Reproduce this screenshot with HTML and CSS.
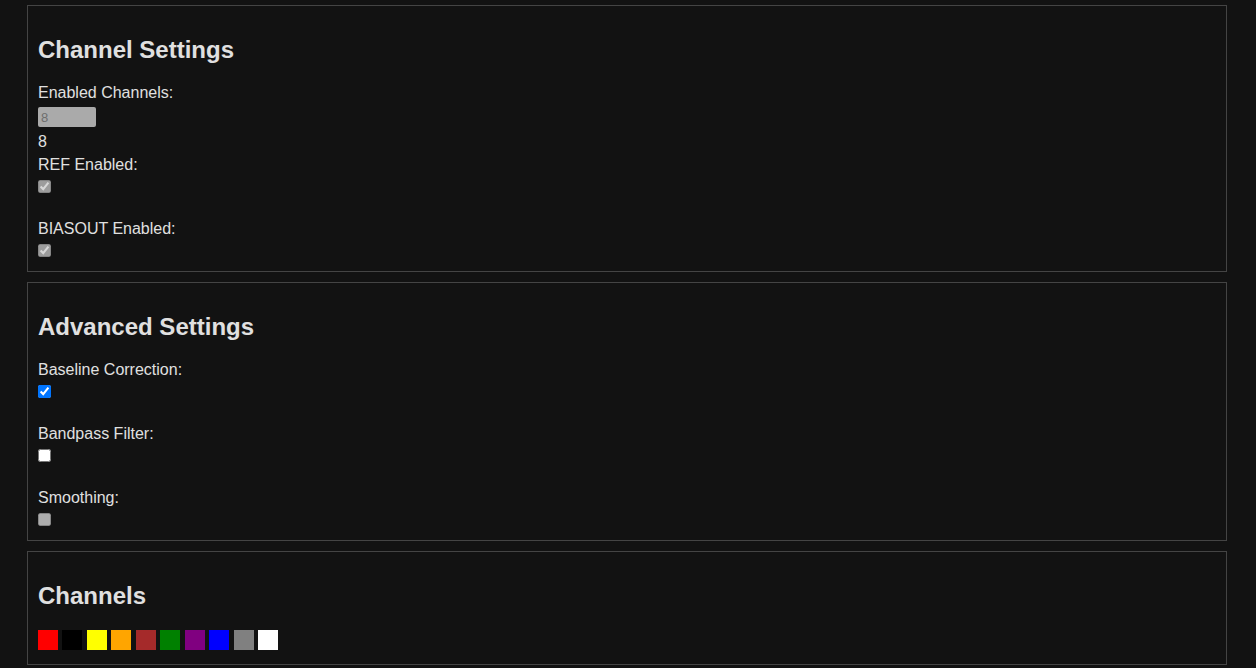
FILE: index.html
```html
<!DOCTYPE html>
<html>
<head>
    <title>Settings</title>
    <link rel="stylesheet" href="styles.css">
</head>
<body>
    <div class="container">
        <!-- Channel Settings -->
        <div class="section">
            <h2>Channel Settings</h2>
            <div class="field compact">
                <label>Enabled Channels:</label>
                <input type="text" class="channel-count" value="8" disabled>
                <span class="value">8</span>
            </div>
            <div class="field">
                <label>REF Enabled:</label>
                <input type="checkbox" checked disabled>
            </div>
            <div class="field">
                <label>BIASOUT Enabled:</label>
                <input type="checkbox" checked disabled>
            </div>
        </div>

        <!-- Advanced Settings -->
        <div class="section">
            <h2>Advanced Settings</h2>
            <div class="field">
                <label>Baseline Correction:</label>
                <input type="checkbox" checked>
            </div>
            <div class="field">
                <label>Bandpass Filter:</label>
                <input type="checkbox">
            </div>
            <div class="field">
                <label>Smoothing:</label>
                <input type="checkbox" disabled>
            </div>
        </div>

        <!-- Channels -->
        <div class="section channels">
            <h2>Channels</h2>
            <div class="swatches">
                <span class="swatch" style="background: red;"></span>
                <span class="swatch" style="background: black;"></span>
                <span class="swatch" style="background: yellow;"></span>
                <span class="swatch" style="background: orange;"></span>
                <span class="swatch" style="background: brown;"></span>
                <span class="swatch" style="background: green;"></span>
                <span class="swatch" style="background: purple;"></span>
                <span class="swatch" style="background: blue;"></span>
                <span class="swatch" style="background: gray;"></span>
                <span class="swatch" style="background: white;"></span>
            </div>
        </div>
    </div>
</body>
</html>
```

FILE: styles.css
```css
body { margin: 0; padding: 5px 0 0 27px; background: #121212; color: #e0e0e0; font-family: "Liberation Sans", Arial, sans-serif; font-size: 16px; }
.container { width: 1200px; }
.section { box-sizing: border-box; width: 1200px; padding: 10px 10px 14px; border: 1px solid #444; margin-bottom: 10px; }
.section.channels { padding-bottom: 10px; margin-bottom: 0; }
h2 { font-size: 24px; margin: 20px 0; }
.field { margin-bottom: 27px; }
.field:last-child { margin-bottom: 0; }
.field.compact { margin-bottom: 5px; }
label { display: block; margin-bottom: 6px; }
.compact label { margin-bottom: 5px; }
input[type="checkbox"] { display: block; margin: 0; width: 13px; height: 13px; }
.channel-count { display: block; box-sizing: border-box; width: 58px; height: 20px; margin-bottom: 6px; padding: 0 3px; border: none; border-radius: 2px; background: #aaa; color: #6e6e6e; font-family: "Liberation Sans", Arial, sans-serif; font-size: 13px; }
.value { display: block; }
.swatch { display: inline-block; width: 20px; height: 20px; }
```
